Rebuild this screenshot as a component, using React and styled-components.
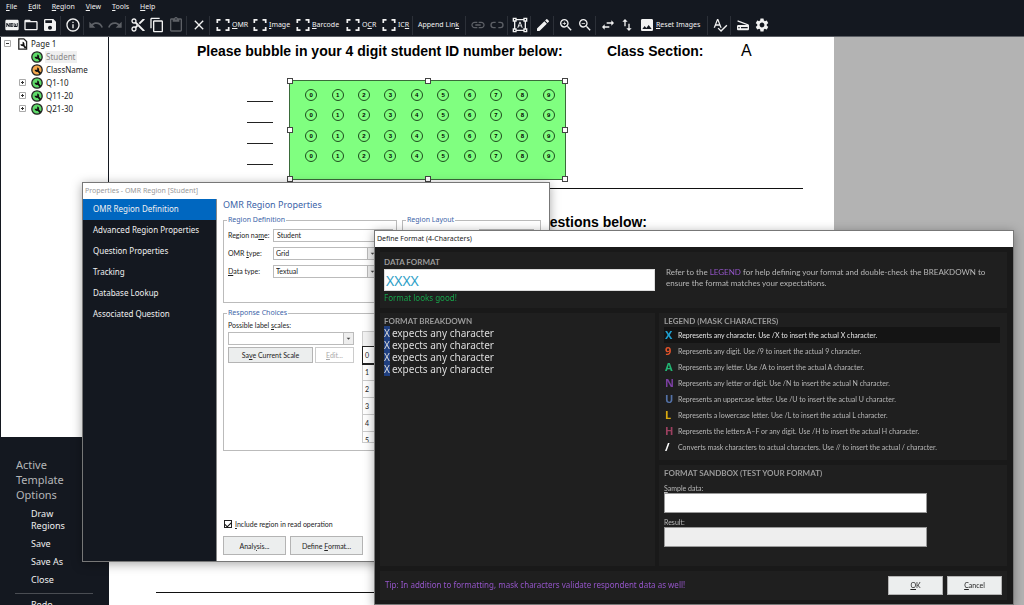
import React from 'react'
import styled, {createGlobalStyle} from "styled-components";
import {
  MdFiberNew, MdFolderOpen, MdSave, MdInfoOutline, MdUndo, MdRedo, MdContentCut, MdContentCopy,
  MdContentPaste, MdClose, MdLink, MdEdit, MdZoomIn, MdZoomOut, MdSwapHoriz, MdSwapVert,
  MdImage, MdSpellcheck, MdScanner, MdSettings, MdFormatShapes, MdArrowDropDown
} from "react-icons/md";

const dark = "#141820";
const ui = `"Noto Sans", "Open Sans", sans-serif`;
const small = `Lato, "Noto Sans", sans-serif`;

const GlobalStyle = createGlobalStyle`
*{box-sizing:border-box;}
body{margin:0;overflow:hidden;font-family:${ui};font-size:7px;line-height:12px;color:#222;}
button,input,select{font:inherit;color:inherit;margin:0;border-radius:0;}
u{text-underline-offset:1px;text-decoration-thickness:1px;}
`

/* shell */
const Shell = styled.div`position:relative;height:100vh;display:flex;flex-direction:column;background:${dark};overflow:hidden;`
const MenuBar = styled.nav`display:flex;gap:11px;height:14px;padding-left:6px;color:#f0f0f0;`
const MenuItem = styled.button`border:none;background:none;padding:0;line-height:14px;`
const Toolbar = styled.div`display:flex;align-items:center;height:23px;padding-left:2px;color:#f2f2f2;border-bottom:1px solid #5b5e64;`
const Tool = styled.button`
  display:flex;align-items:center;justify-content:${({$w}) => $w ? "flex-start" : "center"};
  gap:1px;flex:none;width:${({$w}) => $w || 19}px;height:20px;padding:0 0 0 ${({$w}) => $w ? 3 : 0}px;
  border:none;background:none;white-space:nowrap;
  color:${({$off}) => $off ? "#5d6066" : "#f2f2f2"};
  svg{flex:none;width:16px;height:16px;}
`
const Sep = styled.span`flex:none;width:1px;height:19px;margin:0 2px 0 1px;background:#2c3038;`
const Work = styled.div`flex:1;display:flex;min-height:0;`

/* sidebar */
const Side = styled.aside`flex:none;width:109px;display:flex;flex-direction:column;padding:0 1px;overflow:hidden;`
const Tree = styled.ul`flex:none;height:400px;margin:0;padding:0 0 0 3px;list-style:none;background:#fff;`
const Node = styled.li`
  display:flex;align-items:center;height:13px;gap:2px;padding-left:${({$indent}) => $indent || 0}px;font-size:8px;
  svg{flex:none;}
`
const Toggle = styled.span`
  flex:none;width:7px;height:7px;margin-right:3px;
  svg{display:block;}
`
const NodeName = styled.span`
  line-height:12px;padding:0 1px;
  ${({$sel}) => $sel && "background:#efefef;color:#888;"}
`
const SideTitle = styled.h2`margin:20px 36px 6px 15px;font-size:11px;line-height:15px;font-weight:400;color:#b4b6b8;`
const SideLink = styled.a`display:block;margin:0 36px 6px 30px;font-size:9px;line-height:12px;color:#f0f0f0;text-decoration:none;white-space:${({$wrap}) => $wrap ? "normal" : "nowrap"};`
const SideRule = styled.hr`flex:none;width:78px;height:1px;margin:1px 0 5px 14px;border:none;background:#4a4d53;`

/* scanned form */
const Canvas = styled.main`flex:1;display:flex;padding-right:190px;background:#b3b3b3;min-width:0;`
const Sheet = styled.div`flex:1;display:flex;flex-direction:column;background:#fff;font-family:"Liberation Sans",Arial,sans-serif;color:#000;`
const SheetHead = styled.div`display:grid;grid-template-columns:410px 134px auto;align-items:center;height:28px;padding-left:88px;white-space:nowrap;`
const Heading = styled.h1`margin:0;font-size:14px;line-height:20px;`
const Grade = styled.span`font-size:16px;`
const Answer = styled.div`display:flex;margin:15px 0 0 138px;`
const Blanks = styled.div`
  width:26px;margin:2px 16px 0 0;
  i{display:block;height:20px;margin-bottom:1px;border-bottom:1px solid #222;}
`
const Region = styled.div`
  position:relative;width:277px;height:100px;border:1px solid #3a6b3a;background:#80ff80;
  display:grid;grid-template-columns:repeat(10,1fr);grid-template-rows:repeat(4,1fr);
  place-items:center;padding:4px 3px 13px 8px;
`
const Bubble = styled.span`width:12px;height:12px;border:1px solid #1d4d1d;border-radius:50%;font-size:6px;line-height:10px;font-weight:700;text-align:center;`
const Handle = styled.b`position:absolute;width:6px;height:6px;margin:-3px;background:#fff;border:1px solid #444;`
const Rule = styled.hr`width:647px;height:1px;margin:8px 0 0 47px;border:none;background:#111;`
const SubHead = styled.h2`margin:23px 0 0;width:538px;font-size:14px;line-height:20px;text-align:right;`
const FootRule = styled(Rule)`margin-top:auto;margin-bottom:12px;`

/* windows */
const Window = styled.section`position:absolute;display:flex;flex-direction:column;border:1px solid #777;background:#fff;box-shadow:0 2px 10px rgba(0,0,0,.35);`
const PropsWindow = styled(Window)`left:82px;top:182px;width:468px;height:380px;`
const FormatWindow = styled(Window)`left:374px;top:230px;right:10px;height:375px;background:#191919;color:#b8b8b8;`
const TitleBar = styled.header`height:16px;flex:none;padding-left:2px;line-height:15px;background:#fff;color:${({$idle}) => $idle ? "#999" : "#222"};`
const Split = styled.div`flex:1;display:flex;min-height:0;`
const Nav = styled.nav`flex:none;width:134px;background:${dark};border-right:1px solid #888;`
const NavItem = styled.a`display:block;height:21px;padding-left:10px;line-height:20px;font-size:8px;color:#f0f0f0;text-decoration:none;background:${({$on}) => $on ? "#0067c0" : "none"};`
const Pane = styled.div`flex:1;display:flex;flex-direction:column;padding:0 8px 6px 6px;`
const PaneTitle = styled.h2`margin:0;font-size:9px;line-height:12px;font-weight:400;color:#3c64a8;`
const Groups = styled.div`display:grid;grid-template-columns:174px 139px;gap:5px;margin:3px 0 4px;`
const Group = styled.fieldset`
  min-width:0;height:${({$h}) => $h}px;margin:0;padding:0 4px;border:1px solid #bbb;
  legend{padding:0 1px;margin-left:-1px;line-height:12px;color:#3c64a8;}
`
const Line = styled.label`
  display:grid;grid-template-columns:${({$label}) => $label || 45}px ${({$field}) => $field || 105}px;align-items:center;height:18px;
  font-family:${small};
`
const Input = styled.input`width:100%;height:13px;padding:0 3px;border:1px solid #bbb;background:#fff;`
const Drop = styled.span`
  position:relative;display:block;
  select{display:block;appearance:none;width:100%;height:13px;padding:0 2px;border:1px solid #bbb;background:#fff;line-height:11px;}
  svg{position:absolute;right:0;top:0;width:11px;height:13px;border:1px solid #bbb;background:#eee;color:#444;pointer-events:none;}
`
const Choices = styled.div`display:grid;grid-template-columns:126px 100px;gap:8px;font-family:${small};`
const Scales = styled.div`
  label{display:block;line-height:13px;}
`
const ButtonRow = styled.div`display:flex;gap:${({$gap}) => $gap || 2}px;margin-top:${({$top}) => $top || 0}px;`
const Button = styled.button`
  width:${({$w}) => $w}px;height:${({$h}) => $h || 19}px;padding:0;border:1px solid #b4b4b4;background:#eceeee;
  color:#222;font-family:${small};
  &:disabled{background:#fff;color:#aaa;border-color:#ccc;}
`
const List = styled.table`
  margin-top:12px;border-collapse:collapse;border:1px solid #ccc;width:100px;
  th{height:15px;padding:0;background:#f2f2f2;}
  td{height:17px;padding:0 2px;border-bottom:1px solid #ccc;line-height:14px;}
  tr.current td{border:1px solid #222;border-bottom:2px solid #222;}
`
const ListClip = styled.div`height:124px;overflow:hidden;border-bottom:1px solid #ccc;`
const Check = styled.label`
  display:flex;align-items:center;gap:3px;margin:auto 0 6px 1px;font-family:${small};
  input{appearance:none;width:8px;height:8px;border:1px solid #222;display:grid;place-items:center;}
  input:checked::after{content:"";width:5px;height:3px;border:solid #111;border-width:0 0 1px 1px;transform:rotate(-45deg);}
`

/* format dialog */
const Body = styled.div`flex:1;display:grid;grid-template-columns:275px 1fr;grid-template-rows:56px 147px 101px 29px;gap:5px 4px;padding:5px 6px 5px 5px;`
const Card = styled.div`background:#1f1f1f;padding:2px 5px 0;`
const TopCard = styled(Card)`grid-column:1 / 3;display:flex;gap:11px;padding:4px 12px 0 4px;`
const TallCard = styled(Card)`grid-row:2 / 4;padding-left:4px;`
const Caption = styled.h3`margin:0;font-size:8px;line-height:12px;font-weight:700;color:#9a9a9a;font-family:${small};`
const FormatField = styled.label`flex:none;width:271px;`
const FormatInput = styled.input`display:block;width:100%;height:22px;padding:0 1px;border:1px solid #ddd;outline:none;background:#fff;font-size:14px;color:#2f9fc8;caret-color:#333;`
const Good = styled.output`display:block;line-height:14px;font-size:8px;color:#17a34a;`
const Help = styled.p`
  margin:11px 0 0;line-height:11px;font-size:8px;font-family:${small};
  a{color:#9455c8;text-decoration:none;}
`
const Expect = styled.div`
  font-size:10px;line-height:12px;color:#dcdcdc;
  mark{background:#1f3f80;color:#dcdcdc;margin-right:2px;}
`
const Legend = styled.div`display:grid;grid-template-columns:13px 1fr;align-items:center;height:16px;margin-right:2px;padding-left:1px;font-family:${small};background:${({$on}) => $on ? "#141414" : "none"};color:${({$on}) => $on ? "#e4e4e4" : "#b8b8b8"};`
const Mask = styled.b`font-family:${ui};font-size:11px;color:${({$c}) => $c};`
const Test = styled.label`
  display:block;width:263px;margin-top:4px;line-height:10px;font-family:${small};
  input{display:block;width:100%;height:20px;border:1px solid #999;background:#fff;}
  input:read-only{background:#eee;}
`
const Footer = styled(Card)`grid-column:1 / 3;display:flex;align-items:center;gap:4px;padding:0 5px 1px;`
const Tip = styled.span`flex:1;color:#9455c8;font-size:8px;`

const Brackets = () => (
  <svg viewBox="0 0 16 16" fill="none" stroke="currentColor" strokeWidth="1.7">
    <path d="M5.5 2.8H2.3v3.2M10.5 2.8h3.2v3.2M2.3 10v3.2h3.2M13.7 10v3.2h-3.2" />
  </svg>
)

const Broken = () => (
  <svg viewBox="0 0 24 24" fill="none" stroke="currentColor" strokeWidth="2">
    <path d="M10 8H7a4 4 0 0 0 0 8h3M14 8h3a4 4 0 0 1 0 8h-3" />
  </svg>
)

const Badge = ({color}) => (
  <svg width="12" height="12" viewBox="0 0 12 12">
    <circle cx="6" cy="6" r="5.2" fill={color} stroke="#222" strokeWidth="1.3" />
    <path d="M6.2 3.4v2.4H3.6a2.2 2.2 0 0 0 3 2l2.2 2.4 1.4-1.3-2.2-2.4a2.3 2.3 0 0 0-1.8-3.1z" fill="#111" />
  </svg>
)

const PageIcon = () => (
  <svg width="12" height="12" viewBox="-2 0 12 12">
    <path d="M.8.8h5l2.8 2.8v7.6H.8z" fill="#fff" stroke="#222" strokeWidth="1.3" />
    <path d="M4.6 3.8v2.4H2.4a2 2 0 0 0 2.6 1.9l2 2.6 1.4-1.2-2-2.6a2.3 2.3 0 0 0-1.8-3.1z" fill="#111" />
  </svg>
)

const Expander = ({open}) => (
  <Toggle>
    <svg width="7" height="7" viewBox="0 0 7 7" fill="none">
      <path d="M.5.5h6v6h-6z" stroke="#aaa" />
      <path d={open ? "M2 3.5h3" : "M2 3.5h3M3.5 2v3"} stroke="#333" />
    </svg>
  </Toggle>
)

const masks = [
  ["X", "#1f9fd0", "Represents any character. Use /X to insert the actual X character."],
  ["9", "#e2532a", "Represents any digit. Use /9 to insert the actual 9 character."],
  ["A", "#22b573", "Represents any letter. Use /A to insert the actual A character."],
  ["N", "#7a3fa0", "Represents any letter or digit. Use /N to insert the actual N character."],
  ["U", "#5472a8", "Represents an uppercase letter. Use /U to insert the actual U character."],
  ["L", "#d8a810", "Represents a lowercase letter. Use /L to insert the actual L character."],
  ["H", "#9c4060", "Represents the letters A–F or any digit. Use /H to insert the actual H character."],
  ["/", "#ffffff", "Converts mask characters to actual characters. Use // to insert the actual / character."],
]

const handles = [[0, 0], [50, 0], [100, 0], [0, 50], [100, 50], [0, 100], [50, 100], [100, 100]]
const questions = ["Q1-10", "Q11-20", "Q21-30"]
const pages = ["OMR Region Definition", "Advanced Region Properties", "Question Properties", "Tracking", "Database Lookup", "Associated Question"]

const AppToolbar = () => (
  <Toolbar>
    <Tool aria-label="New"><MdFiberNew /></Tool>
    <Tool aria-label="Open"><MdFolderOpen /></Tool>
    <Tool aria-label="Save"><MdSave /></Tool>
    <Sep />
    <Tool aria-label="Info"><MdInfoOutline /></Tool>
    <Sep />
    <Tool aria-label="Undo" $off><MdUndo /></Tool>
    <Tool aria-label="Redo" $off><MdRedo /></Tool>
    <Sep />
    <Tool aria-label="Cut"><MdContentCut /></Tool>
    <Tool aria-label="Copy"><MdContentCopy /></Tool>
    <Tool aria-label="Paste" $off><MdContentPaste /></Tool>
    <Sep />
    <Tool aria-label="Delete"><MdClose /></Tool>
    <Sep />
    <Tool $w={37}><Brackets /><span><u>O</u>MR</span></Tool>
    <Tool $w={43}><Brackets /><span><u>I</u>mage</span></Tool>
    <Tool $w={50}><Brackets /><span><u>B</u>arcode</span></Tool>
    <Tool $w={36}><Brackets /><span>O<u>C</u>R</span></Tool>
    <Tool $w={33}><Brackets /><span>IC<u>R</u></span></Tool>
    <Sep />
    <Tool $w={49}><span>Append Lin<u>k</u></span></Tool>
    <Sep />
    <Tool aria-label="Link" $off><MdLink /></Tool>
    <Tool aria-label="Unlink" $off><Broken /></Tool>
    <Sep />
    <Tool aria-label="Text region"><MdFormatShapes /></Tool>
    <Sep />
    <Tool aria-label="Edit"><MdEdit /></Tool>
    <Sep />
    <Tool aria-label="Zoom in"><MdZoomIn /></Tool>
    <Tool aria-label="Zoom out"><MdZoomOut /></Tool>
    <Sep />
    <Tool aria-label="Fit width"><MdSwapHoriz /></Tool>
    <Tool aria-label="Fit height"><MdSwapVert /></Tool>
    <Tool $w={70}><MdImage /><span><u>R</u>eset Images</span></Tool>
    <Sep />
    <Tool aria-label="Spelling"><MdSpellcheck /></Tool>
    <Sep />
    <Tool aria-label="Scanner"><MdScanner /></Tool>
    <Tool aria-label="Settings"><MdSettings /></Tool>
  </Toolbar>
)

const Sidebar = () => (
  <Side>
    <Tree>
      <Node><Expander open /><PageIcon /><NodeName>Page 1</NodeName></Node>
      <Node $indent={27}><Badge color="#5fdc6a" /><NodeName $sel>Student</NodeName></Node>
      <Node $indent={27}><Badge color="#f5a94e" /><NodeName>ClassName</NodeName></Node>
      {questions.map((name) => (
        <Node $indent={15} key={name}><Expander /><Badge color="#5fdc6a" /><NodeName>{name}</NodeName></Node>
      ))}
    </Tree>
    <SideTitle>Active Template Options</SideTitle>
    <SideLink href="#draw" $wrap>Draw Regions</SideLink>
    <SideLink href="#save">Save</SideLink>
    <SideLink href="#save-as">Save As</SideLink>
    <SideLink href="#close">Close</SideLink>
    <SideRule />
    <SideLink href="#redo">Redo</SideLink>
  </Side>
)

const FormSheet = () => (
  <Sheet>
    <SheetHead>
      <Heading>Please bubble in your 4 digit student ID number below:</Heading>
      <Heading>Class Section:</Heading>
      <Grade>A</Grade>
    </SheetHead>
    <Answer>
      <Blanks><i /><i /><i /><i /></Blanks>
      <Region>
        {[0, 1, 2, 3].map((row) => [...Array(10)].map((_, n) => <Bubble key={`${row}-${n}`}>{n}</Bubble>))}
        {handles.map(([x, y]) => <Handle key={`${x}-${y}`} style={{left: `${x}%`, top: `${y}%`}} />)}
      </Region>
    </Answer>
    <Rule />
    <SubHead>questions below:</SubHead>
    <FootRule />
  </Sheet>
)

const Properties = () => (
  <PropsWindow>
    <TitleBar $idle>Properties - OMR Region [Student]</TitleBar>
    <Split>
      <Nav>
        {pages.map((page, i) => <NavItem href="#page" $on={i === 0} key={page}>{page}</NavItem>)}
      </Nav>
      <Pane>
        <PaneTitle>OMR Region Properties</PaneTitle>
        <Groups>
          <Group $h={89}>
            <legend>Region Definition</legend>
            <Line $field={120}><span>Region na<u>m</u>e:</span><Input defaultValue="Student" /></Line>
            <Line><span>OMR <u>t</u>ype:</span><Drop><select><option>Grid</option></select><MdArrowDropDown /></Drop></Line>
            <Line><span><u>D</u>ata type:</span><Drop><select><option>Textual</option></select><MdArrowDropDown /></Drop></Line>
          </Group>
          <Group $h={89}>
            <legend>Region Layout</legend>
            <Line $label={72} $field={55}><span /><Input aria-label="Columns" /></Line>
          </Group>
        </Groups>
        <Group $h={144}>
          <legend>Response Choices</legend>
          <Choices>
            <Scales>
              <label htmlFor="scale">Possible label <u>s</u>cales:</label>
              <Drop><select id="scale"><option></option></select><MdArrowDropDown /></Drop>
              <ButtonRow $top={2}>
                <Button $w={85} $h={16}>Sa<u>v</u>e Current Scale</Button>
                <Button $w={39} $h={16} disabled><u>E</u>dit...</Button>
              </ButtonRow>
            </Scales>
            <ListClip>
              <List>
                <thead><tr><th /></tr></thead>
                <tbody>
                  {[0, 1, 2, 3, 4, 5].map((n) => <tr key={n} className={n === 0 ? "current" : ""}><td>{n}</td></tr>)}
                </tbody>
              </List>
            </ListClip>
          </Choices>
        </Group>
        <Check><input type="checkbox" defaultChecked /><span><u>I</u>nclude region in read operation</span></Check>
        <ButtonRow $gap={4}>
          <Button $w={63}>Anal<u>y</u>sis...</Button>
          <Button $w={73}>Define <u>F</u>ormat...</Button>
        </ButtonRow>
      </Pane>
    </Split>
  </PropsWindow>
)

const DefineFormat = () => (
  <FormatWindow>
    <TitleBar>Define Format (4-Characters)</TitleBar>
    <Body>
      <TopCard>
        <FormatField>
          <Caption as="span">DATA FORMAT</Caption>
          <FormatInput defaultValue="XXXX" autoFocus />
          <Good>Format looks good!</Good>
        </FormatField>
        <Help>
          Refer to the <a href="#legend">LEGEND</a> for help defining your format and double-check the BREAKDOWN to
          ensure the format matches your expectations.
        </Help>
      </TopCard>
      <TallCard>
        <Caption>FORMAT BREAKDOWN</Caption>
        {[0, 1, 2, 3].map((n) => <Expect key={n}><mark>X</mark>expects any character</Expect>)}
      </TallCard>
      <Card id="legend">
        <Caption>LEGEND (MASK CHARACTERS)</Caption>
        {masks.map(([char, color, text], i) => (
          <Legend $on={i === 0} key={char}><Mask $c={color}>{char}</Mask><span>{text}</span></Legend>
        ))}
      </Card>
      <Card>
        <Caption>FORMAT SANDBOX (TEST YOUR FORMAT)</Caption>
        <Test><span><u>S</u>ample data:</span><input /></Test>
        <Test><span>Result:</span><input readOnly /></Test>
      </Card>
      <Footer>
        <Tip>Tip: In addition to formatting, mask characters validate respondent data as well!</Tip>
        <Button $w={55}><u>O</u>K</Button>
        <Button $w={55}><u>C</u>ancel</Button>
      </Footer>
    </Body>
  </FormatWindow>
)

const App = () => {
  return (
    <Shell>
      <GlobalStyle />
      <MenuBar>
        <MenuItem><u>F</u>ile</MenuItem>
        <MenuItem><u>E</u>dit</MenuItem>
        <MenuItem><u>R</u>egion</MenuItem>
        <MenuItem><u>V</u>iew</MenuItem>
        <MenuItem><u>T</u>ools</MenuItem>
        <MenuItem><u>H</u>elp</MenuItem>
      </MenuBar>
      <AppToolbar />
      <Work>
        <Sidebar />
        <Canvas><FormSheet /></Canvas>
      </Work>
      <Properties />
      <DefineFormat />
    </Shell>
  );
};

export default App;
